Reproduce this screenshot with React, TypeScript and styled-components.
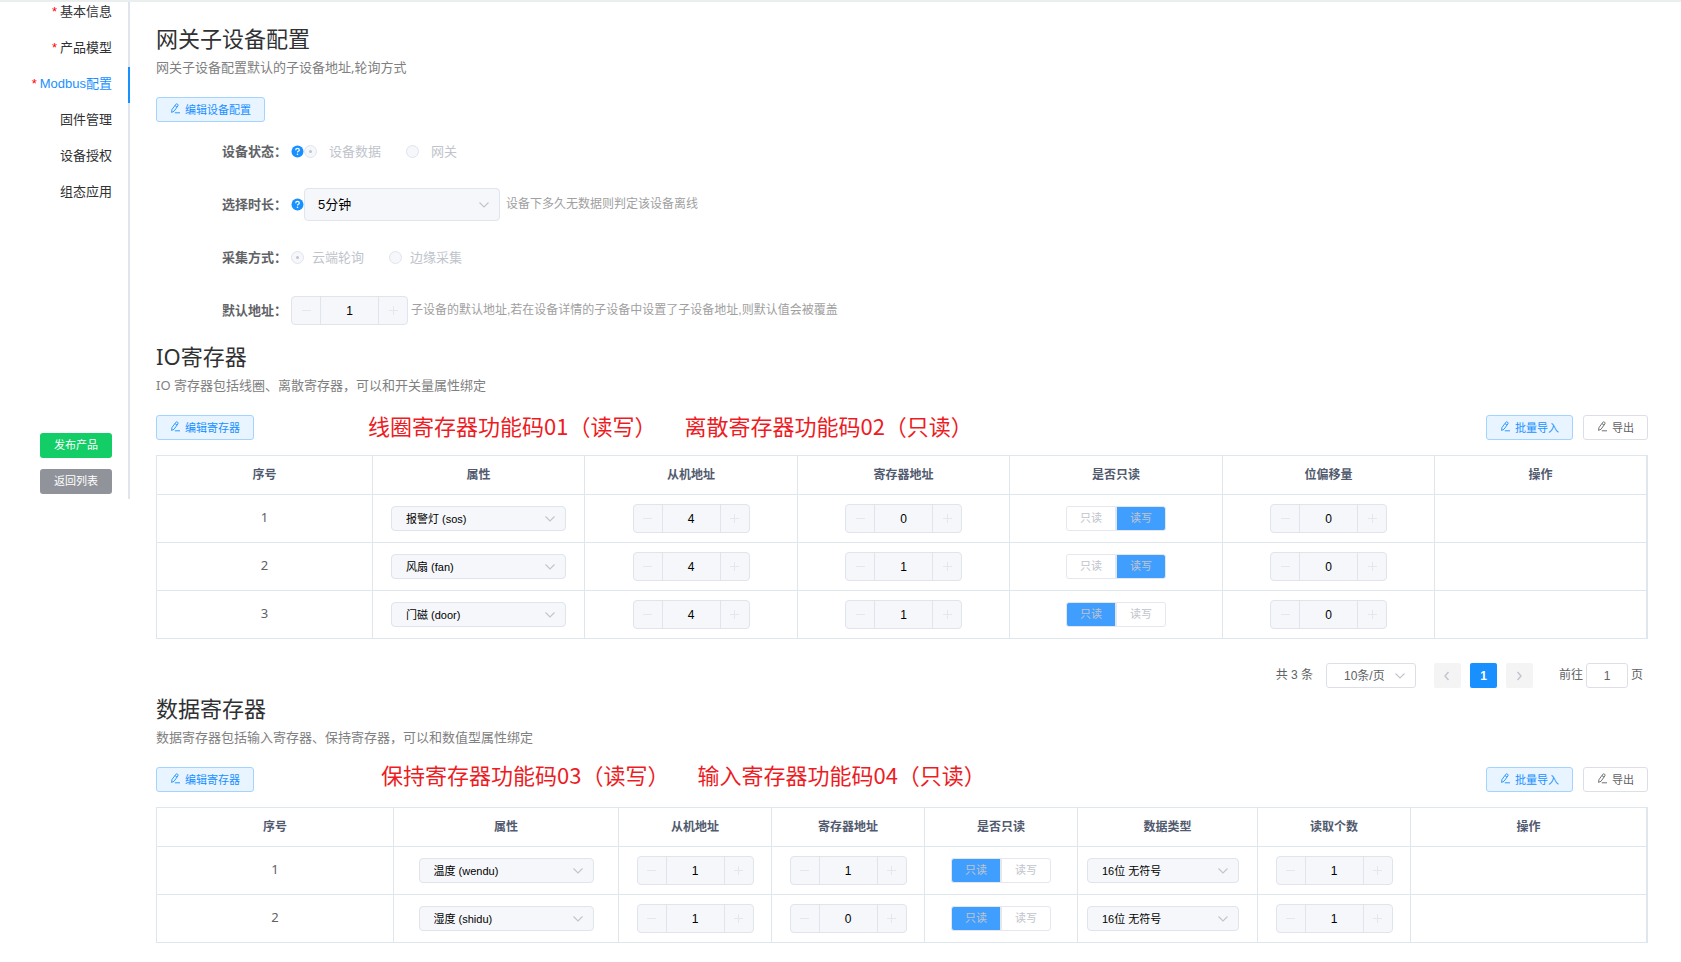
import React, { useId } from "react";
import styled, { createGlobalStyle, css } from "styled-components";

const sans = '"Liberation Sans", "Noto Sans CJK SC", sans-serif';
const humanist = '"Noto Sans", "Noto Sans CJK SC", sans-serif';

const Global = createGlobalStyle`
  *, *::before, *::after { box-sizing: border-box; }
  body { margin: 0; background: #fff; color: #606266; font-family: ${humanist}; font-size: 13px; }
  button, input, select { font-family: ${sans}; margin: 0; }
`;

const Page = styled.div`
  display: flex;
  align-items: flex-start;
  border-top: 2px solid #ebeeee;
  min-height: 100vh;
`;

/* ---------- side navigation ---------- */

const Sidebar = styled.aside`
  flex: 0 0 130px;
  display: flex;
  flex-direction: column;
  padding-bottom: 5px;
  border-right: 2px solid #dfe4ed;
`;

const NavViewport = styled.nav`
  display: flex;
  flex-direction: column;
  justify-content: flex-end;
  height: 209px;
  overflow: hidden;
  margin-right: -2px;
`;

const NavItem = styled.a<{ $active?: boolean }>`
  flex: 0 0 36px;
  padding-right: 16px;
  border-right: 2px solid ${(p) => (p.$active ? "#1890ff" : "#dfe4ed")};
  color: ${(p) => (p.$active ? "#1890ff" : "#303133")};
  font: 13px/34px ${sans};
  text-align: right;
  text-decoration: none;
  white-space: nowrap;
`;

const Star = styled.span`
  color: #ff0000;
  margin-right: 3px;
`;

const SideActions = styled.div`
  display: flex;
  flex-direction: column;
  gap: 11px;
  padding: 222px 16px 0 40px;
`;

const SolidButton = styled.button<{ $color: string }>`
  height: 25px;
  padding: 0 0 3px;
  border: 0;
  border-radius: 3px;
  background: ${(p) => p.$color};
  color: #fff;
  font-size: 11px;
`;

/* ---------- content ---------- */

const Content = styled.main`
  flex: 1;
  min-width: 0;
  padding: 20px 33px 18px 26px;
`;

const Title = styled.h1`
  margin: 0;
  color: #303133;
  font-size: 22px;
  line-height: 32px;
  font-weight: 400;
`;

const Description = styled.p`
  margin: 3px 0 0;
  color: #808080;
  font-size: 13px;
  line-height: 20px;
`;

const Section = styled.section<{ $gap: number }>`
  margin-top: ${(p) => p.$gap}px;
`;

const Toolbar = styled.div`
  display: flex;
  align-items: center;
  gap: 10px;
  height: 25px;
  margin-top: 20px;
`;

const PlainButton = styled.button<{ $primary?: boolean }>`
  display: inline-flex;
  align-items: center;
  gap: 4px;
  height: 25px;
  padding: 0 13px 2px;
  border: 1px solid ${(p) => (p.$primary ? "#a3d3ff" : "#dcdfe6")};
  border-radius: 3px;
  background: ${(p) => (p.$primary ? "#e8f4ff" : "#fff")};
  color: ${(p) => (p.$primary ? "#1890ff" : "#606266")};
  font-size: 11px;
  white-space: nowrap;
`;

const Annotation = styled.p<{ $lead: number; $lift: number }>`
  display: flex;
  flex: 1;
  gap: 28px;
  margin: 0;
  padding: 0 0 ${(p) => p.$lift}px ${(p) => p.$lead}px;
  color: #ed1c24;
  font: 22px/25px "Noto Sans CJK SC", sans-serif;
  white-space: nowrap;
`;

/* ---------- form ---------- */

const Form = styled.form`
  display: grid;
  row-gap: 20px;
  margin-top: 13px;
`;

const Field = styled.div`
  display: flex;
  align-items: center;
  height: 33px;
`;

const FieldLabel = styled.span`
  width: 135px;
  padding: 0 0 3px 66px;
  color: #606266;
  font-family: ${sans};
  font-size: 13px;
  font-weight: 700;
  white-space: nowrap;
`;

const Note = styled.span<{ $gap: number }>`
  margin-left: ${(p) => p.$gap}px;
  padding-bottom: 2px;
  color: #a0a0a0;
  font: 12px/18px ${sans};
`;

const RadioLabel = styled.label<{ $gap: number; $next: number }>`
  display: inline-flex;
  align-items: center;
  gap: ${(p) => p.$gap}px;
  margin-right: ${(p) => p.$next}px;
  color: #c0c4cc;
  font-size: 13px;
  span { padding-bottom: 3px; }
`;

const Radio = styled.input`
  appearance: none;
  display: grid;
  place-items: center;
  width: 13px;
  height: 13px;
  margin: 0;
  border: 1px solid #dfe4ed;
  border-radius: 50%;
  background: #f5f7fa;
  &:checked::before {
    content: "";
    width: 3px;
    height: 3px;
    border-radius: 50%;
    background: #c0c4cc;
  }
`;

const SelectFrame = styled.span<{ $width: number }>`
  position: relative;
  display: inline-block;
  width: ${(p) => p.$width}px;
  max-width: 100%;
  vertical-align: middle;
  svg {
    position: absolute;
    top: 50%;
    right: 10px;
    margin-top: -6px;
    pointer-events: none;
  }
`;

const SelectBox = styled.select<{ $size: "large" | "small" | "page" }>`
  appearance: none;
  display: block;
  width: 100%;
  height: 25px;
  padding: 0 14px;
  border: 1px solid #dfe4ed;
  border-radius: 4px;
  background: #f5f7fa;
  color: #000;
  opacity: 1;
  font-size: 11px;
  ${(p) => p.$size === "large" && css`height: 33px; padding: 0 13px; font-size: 13px;`}
  ${(p) =>
    p.$size === "page" &&
    css`
      padding: 0 17px;
      border-color: #dcdfe6;
      border-radius: 3px;
      background: #fff;
      color: #606266;
      font-size: 12px;
    `}
`;

const Stepper = styled.span`
  display: inline-grid;
  grid-template-columns: 28px 1fr 28px;
  width: 117px;
  height: 29px;
  border: 1px solid #dfe4ed;
  border-radius: 4px;
  background: #f5f7fa;
  overflow: hidden;
  vertical-align: middle;
`;

const StepButton = styled.button`
  display: grid;
  place-items: center;
  padding: 0;
  border: 0;
  background: transparent;
`;

const StepValue = styled.input`
  width: 100%;
  min-width: 0;
  padding: 0;
  border: solid #dfe4ed;
  border-width: 0 1px;
  border-radius: 0;
  background: transparent;
  color: #000;
  font-size: 12px;
  text-align: center;
`;

const Segments = styled.span`
  display: inline-flex;
  width: 100px;
  height: 25px;
  vertical-align: middle;
`;

const Segment = styled.label`
  position: relative;
  flex: 1;
  &:first-child span { border-radius: 3px 0 0 3px; }
  &:last-child span { border-radius: 0 3px 3px 0; }
  input {
    position: absolute;
    inset: 0;
    opacity: 0;
  }
  span {
    display: block;
    height: 25px;
    border: 1px solid #e4e7ed;
    background: #fff;
    color: #c0c4cc;
    font: 11px/22px ${sans};
    text-align: center;
  }
  input:checked + span {
    background: #409eff;
  }
`;

/* ---------- tables ---------- */

const Table = styled.table`
  width: 100%;
  margin-top: 15px;
  table-layout: fixed;
  border-collapse: separate;
  border-spacing: 0;
  border: solid #dfe6ec;
  border-width: 1px 1px 0 1px;
`;

const Col = styled.col<{ $share: number }>`
  width: ${(p) => p.$share}%;
`;

const Th = styled.th`
  height: 39px;
  padding: 0;
  border: solid #dfe6ec;
  border-width: 0 1px 1px 0;
  color: #515a6e;
  font: 700 12px/20px ${sans};
`;

const Td = styled.td<{ $left?: boolean }>`
  height: 48px;
  padding: 0 9px;
  border: solid #dfe6ec;
  border-width: 0 1px 1px 0;
  color: #606266;
  font-size: 13px;
  line-height: 20px;
  text-align: ${(p) => (p.$left ? "left" : "center")};
`;

const Index = styled.div`
  padding-bottom: 4px;
`;

/* ---------- pagination ---------- */

const Pager = styled.div`
  display: flex;
  align-items: center;
  justify-content: flex-end;
  height: 25px;
  margin-top: 24px;
  padding-right: 5px;
  color: #606266;
  font: 12px/25px ${sans};
`;

const PagerList = styled.div`
  display: flex;
  gap: 9px;
  margin: 0 26px 0 18px;
`;

const PageButton = styled.button<{ $current?: boolean }>`
  display: grid;
  place-items: center;
  width: 27px;
  height: 25px;
  padding: 0;
  border: 0;
  border-radius: 2px;
  background: ${(p) => (p.$current ? "#1890ff" : "#f4f4f5")};
  color: ${(p) => (p.$current ? "#fff" : "#c0c4cc")};
  font-size: 12px;
  font-weight: 700;
`;

const Total = styled.span`
  margin-right: 13px;
`;

const Jump = styled.label`
  display: flex;
  align-items: center;
  gap: 3px;
`;

const JumpInput = styled.input`
  width: 42px;
  height: 25px;
  padding: 0;
  border: 1px solid #dcdfe6;
  border-radius: 3px;
  color: #606266;
  font-size: 12px;
  text-align: center;
`;

/* ---------- drawings ---------- */

const EditIcon = () => (
  <svg width="11" height="11" viewBox="0 0 11 11" fill="none" stroke="currentColor" strokeWidth="0.9" aria-hidden="true">
    <path d="M1.6 9.4 1.9 6.7 5.8 1.3Q6.5.5 7.5 1.1 8.5 1.9 7.9 2.9L4 8.3 1.6 9.4ZM5 2.6 7 4.1M4.8 9.8H10" />
  </svg>
);

const Chevron = () => (
  <svg width="12" height="12" viewBox="0 0 12 12" fill="none" stroke="#c0c4cc" strokeWidth="1.1" aria-hidden="true">
    <path d="M1.5 3.5 6 8 10.5 3.5" />
  </svg>
);

const HelpIcon = () => (
  <svg width="13" height="13" viewBox="0 0 13 13" role="img" aria-label="帮助">
    <circle cx="6.5" cy="6.5" r="6" fill="#1890ff" />
    <path d="M4.7 5.2Q4.7 3.4 6.5 3.4 8.3 3.4 8.3 4.9 8.3 5.8 7.2 6.3 6.5 6.7 6.5 7.6" fill="none" stroke="#fff" strokeWidth="1.2" />
    <circle cx="6.5" cy="9.3" r="0.8" fill="#fff" />
  </svg>
);

const StepIcon = ({ plus }: { plus?: boolean }) => (
  <svg width="11" height="11" viewBox="0 0 11 11" stroke="#e4e7ed" aria-hidden="true">
    <path d={plus ? "M1 5.5H10M5.5 1V10" : "M1 5.5H10"} />
  </svg>
);

const Arrow = ({ next }: { next?: boolean }) => (
  <svg width="10" height="10" viewBox="0 0 10 10" fill="none" stroke="currentColor" strokeWidth="1.4" aria-hidden="true">
    <path d={next ? "M3.5 1 7 5 3.5 9" : "M6.5 1 3 5 6.5 9"} />
  </svg>
);

/* ---------- controls ---------- */

const NumberBox = ({ value, label }: { value: number; label: string }) => (
  <Stepper>
    <StepButton type="button" disabled aria-label="减少"><StepIcon /></StepButton>
    <StepValue type="text" inputMode="numeric" defaultValue={value} disabled aria-label={label} />
    <StepButton type="button" disabled aria-label="增加"><StepIcon plus /></StepButton>
  </Stepper>
);

type SelectProps = { value: string; label: string; width: number; size?: "large" | "small" | "page" };

const Select = ({ value, label, width, size = "small" }: SelectProps) => (
  <SelectFrame $width={width}>
    <SelectBox $size={size} aria-label={label} disabled={size !== "page"}>
      <option>{value}</option>
    </SelectBox>
    <Chevron />
  </SelectFrame>
);

type RadioOptionProps = { name: string; text: string; checked?: boolean; gap: number; next?: number };

const RadioOption = ({ name, text, checked, gap, next = 0 }: RadioOptionProps) => (
  <RadioLabel $gap={gap} $next={next}>
    <Radio type="radio" name={name} defaultChecked={checked} disabled />
    <span>{text}</span>
  </RadioLabel>
);

const AccessSwitch = ({ readOnly }: { readOnly: boolean }) => {
  const name = useId();
  return (
    <Segments role="radiogroup" aria-label="是否只读">
      <Segment><input type="radio" name={name} defaultChecked={readOnly} disabled /><span>只读</span></Segment>
      <Segment><input type="radio" name={name} defaultChecked={!readOnly} disabled /><span>读写</span></Segment>
    </Segments>
  );
};

/* ---------- data ---------- */

const navItems = [
  { text: "基本信息", required: true },
  { text: "产品模型", required: true },
  { text: "Modbus配置", required: true, active: true },
  { text: "固件管理" },
  { text: "设备授权" },
  { text: "组态应用" },
];

const ioColumns: [string, number][] = [
  ["序号", 216], ["属性", 212], ["从机地址", 213], ["寄存器地址", 212], ["是否只读", 213], ["位偏移量", 212], ["操作", 212],
];

const ioRows = [
  { name: "报警灯 (sos)", slave: 4, address: 0, readOnly: false, offset: 0 },
  { name: "风扇 (fan)", slave: 4, address: 1, readOnly: false, offset: 0 },
  { name: "门磁 (door)", slave: 4, address: 1, readOnly: true, offset: 0 },
];

const dataColumns: [string, number][] = [
  ["序号", 237], ["属性", 225], ["从机地址", 153], ["寄存器地址", 153], ["是否只读", 153], ["数据类型", 180], ["读取个数", 153], ["操作", 236],
];

const dataRows = [
  { name: "温度 (wendu)", slave: 1, address: 1, readOnly: true, type: "16位 无符号", count: 1 },
  { name: "湿度 (shidu)", slave: 1, address: 0, readOnly: true, type: "16位 无符号", count: 1 },
];

const TableHead = ({ columns }: { columns: [string, number][] }) => {
  const total = columns.reduce((sum, [, w]) => sum + w, 0);
  return (
    <>
      <colgroup>{columns.map(([t, w]) => <Col key={t} $share={(w / total) * 100} />)}</colgroup>
      <thead>
        <tr>{columns.map(([t]) => <Th key={t} scope="col">{t}</Th>)}</tr>
      </thead>
    </>
  );
};

const RegisterToolbar = ({ notes, lead, lift }: { notes: string[]; lead: number; lift: number }) => (
  <Toolbar>
    <PlainButton $primary><EditIcon />编辑寄存器</PlainButton>
    <Annotation $lead={lead} $lift={lift}>{notes.map((n) => <span key={n}>{n}</span>)}</Annotation>
    <PlainButton $primary><EditIcon />批量导入</PlainButton>
    <PlainButton><EditIcon />导出</PlainButton>
  </Toolbar>
);

export default function App() {
  return (
    <Page>
      <Global />
      <Sidebar>
        <NavViewport>
          {navItems.map((item) => (
            <NavItem key={item.text} href="#" $active={item.active}>
              {item.required && <Star>*</Star>}
              {item.text}
            </NavItem>
          ))}
        </NavViewport>
        <SideActions>
          <SolidButton $color="#13ce66">发布产品</SolidButton>
          <SolidButton $color="#909399">返回列表</SolidButton>
        </SideActions>
      </Sidebar>

      <Content>
        <section>
          <Title>网关子设备配置</Title>
          <Description>网关子设备配置默认的子设备地址,轮询方式</Description>
          <Toolbar>
            <PlainButton $primary><EditIcon />编辑设备配置</PlainButton>
          </Toolbar>
          <Form>
            <Field role="radiogroup" aria-label="设备状态">
              <FieldLabel>设备状态：</FieldLabel>
              <HelpIcon />
              <RadioOption name="status" text="设备数据" checked gap={12} next={25} />
              <RadioOption name="status" text="网关" gap={12} />
            </Field>
            <Field>
              <FieldLabel>选择时长：</FieldLabel>
              <HelpIcon />
              <Select value="5分钟" label="选择时长" width={196} size="large" />
              <Note $gap={6}>设备下多久无数据则判定该设备离线</Note>
            </Field>
            <Field role="radiogroup" aria-label="采集方式">
              <FieldLabel>采集方式：</FieldLabel>
              <RadioOption name="mode" text="云端轮询" checked gap={8} next={25} />
              <RadioOption name="mode" text="边缘采集" gap={8} />
            </Field>
            <Field>
              <FieldLabel>默认地址：</FieldLabel>
              <NumberBox value={1} label="默认地址" />
              <Note $gap={3}>子设备的默认地址,若在设备详情的子设备中设置了子设备地址,则默认值会被覆盖</Note>
            </Field>
          </Form>
        </section>

        <Section $gap={13}>
          <Title as="h2">IO寄存器</Title>
          <Description>IO 寄存器包括线圈、离散寄存器，可以和开关量属性绑定</Description>
          <RegisterToolbar lead={104} lift={4} notes={["线圈寄存器功能码01（读写）", "离散寄存器功能码02（只读）"]} />
          <Table>
            <TableHead columns={ioColumns} />
            <tbody>
              {ioRows.map((row, i) => (
                <tr key={row.name}>
                  <Td><Index>{i + 1}</Index></Td>
                  <Td><Select value={row.name} label="属性" width={175} /></Td>
                  <Td><NumberBox value={row.slave} label="从机地址" /></Td>
                  <Td><NumberBox value={row.address} label="寄存器地址" /></Td>
                  <Td><AccessSwitch readOnly={row.readOnly} /></Td>
                  <Td><NumberBox value={row.offset} label="位偏移量" /></Td>
                  <Td />
                </tr>
              ))}
            </tbody>
          </Table>
          <Pager>
            <Total>共 3 条</Total>
            <Select value="10条/页" label="每页条数" width={90} size="page" />
            <PagerList>
              <PageButton disabled aria-label="上一页"><Arrow /></PageButton>
              <PageButton $current>1</PageButton>
              <PageButton disabled aria-label="下一页"><Arrow next /></PageButton>
            </PagerList>
            <Jump>前往<JumpInput defaultValue="1" />页</Jump>
          </Pager>
        </Section>

        <Section $gap={4}>
          <Title as="h2">数据寄存器</Title>
          <Description>数据寄存器包括输入寄存器、保持寄存器，可以和数值型属性绑定</Description>
          <RegisterToolbar lead={117} lift={10} notes={["保持寄存器功能码03（读写）", "输入寄存器功能码04（只读）"]} />
          <Table>
            <TableHead columns={dataColumns} />
            <tbody>
              {dataRows.map((row, i) => (
                <tr key={row.name}>
                  <Td><Index>{i + 1}</Index></Td>
                  <Td><Select value={row.name} label="属性" width={175} /></Td>
                  <Td><NumberBox value={row.slave} label="从机地址" /></Td>
                  <Td><NumberBox value={row.address} label="寄存器地址" /></Td>
                  <Td><AccessSwitch readOnly={row.readOnly} /></Td>
                  <Td $left><Select value={row.type} label="数据类型" width={152} /></Td>
                  <Td><NumberBox value={row.count} label="读取个数" /></Td>
                  <Td />
                </tr>
              ))}
            </tbody>
          </Table>
        </Section>
      </Content>
    </Page>
  );
}
